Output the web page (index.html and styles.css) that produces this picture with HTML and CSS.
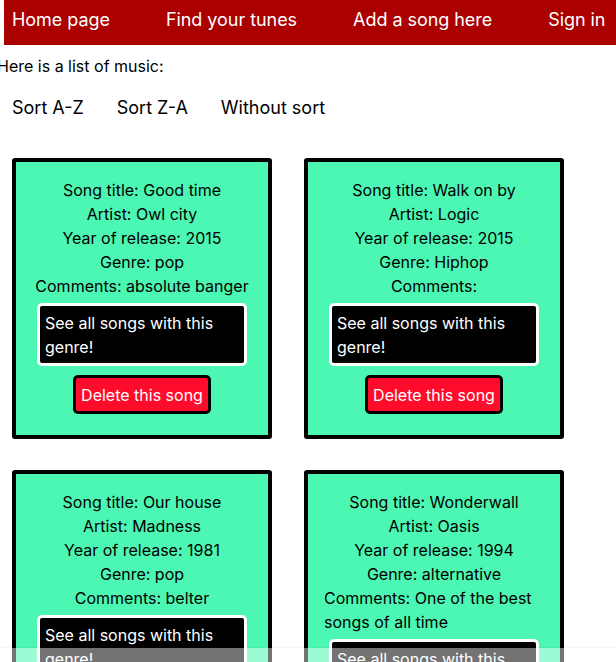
FILE: index.html
```html
<!DOCTYPE html>
<html>
<head>
<meta charset="utf-8">
<link rel="stylesheet" href="styles.css">
</head>
<body>
<nav class="topnav">
  <a class="nav-link">Home page</a>
  <a class="nav-link">Find your tunes</a>
  <a class="nav-link">Add a song here</a>
  <a class="nav-link">Sign in</a>
</nav>
<p class="intro">Here is a list of music:</p>
<div class="sorts">
  <button class="sort-btn">Sort A-Z</button>
  <button class="sort-btn">Sort Z-A</button>
  <button class="sort-btn">Without sort</button>
</div>
<div class="songs">
  <div class="card">
    <p class="line">Song title: Good time</p>
    <p class="line">Artist: Owl city</p>
    <p class="line">Year of release: 2015</p>
    <p class="line">Genre: pop</p>
    <p class="line">Comments: absolute banger</p>
    <button class="genre-btn">See all songs with this genre!</button>
    <button class="delete-btn">Delete this song</button>
  </div>
  <div class="card">
    <p class="line">Song title: Walk on by</p>
    <p class="line">Artist: Logic</p>
    <p class="line">Year of release: 2015</p>
    <p class="line">Genre: Hiphop</p>
    <p class="line">Comments: </p>
    <button class="genre-btn">See all songs with this genre!</button>
    <button class="delete-btn">Delete this song</button>
  </div>
  <div class="card">
    <p class="line">Song title: Our house</p>
    <p class="line">Artist: Madness</p>
    <p class="line">Year of release: 1981</p>
    <p class="line">Genre: pop</p>
    <p class="line">Comments: belter</p>
    <button class="genre-btn">See all songs with this genre!</button>
    <button class="delete-btn">Delete this song</button>
  </div>
  <div class="card">
    <p class="line">Song title: Wonderwall</p>
    <p class="line">Artist: Oasis</p>
    <p class="line">Year of release: 1994</p>
    <p class="line">Genre: alternative</p>
    <p class="line">Comments: One of the best songs of all time</p>
    <button class="genre-btn">See all songs with this genre!</button>
    <button class="delete-btn">Delete this song</button>
  </div>
</div>
<div class="bottom-fade"></div>
</body>
</html>
```

FILE: styles.css
```css
html, body {
  margin: 0;
  padding: 0;
  overflow: hidden;
}
body {
  font-family: Inter, "Noto Sans", sans-serif;
  font-size: 16px;
  line-height: 24px;
  color: #000;
  background: #fff;
}
.topnav {
  display: flex;
  gap: 56px;
  margin-left: 4px;
  height: 45px;
  padding: 0 8px;
  align-items: center;
  background: #aa0000;
}
.nav-link {
  color: #fff;
  font-size: 18px;
  line-height: 22px;
  letter-spacing: -0.05px;
  white-space: nowrap;
  margin-top: -5px;
}
.intro {
  margin: 9px 0 0 -3px;
}
.sorts {
  display: flex;
  gap: 33px;
  padding-left: 12px;
  margin-top: 19px;
}
.sort-btn {
  font-family: inherit;
  font-size: 18px;
  line-height: 22px;
  background: none;
  border: none;
  padding: 0;
  color: #000;
}
.songs {
  display: grid;
  grid-template-columns: 260px 260px;
  column-gap: 32px;
  row-gap: 31px;
  padding-left: 12px;
  margin-top: 39px;
}
.card {
  display: flex;
  flex-direction: column;
  align-items: center;
  background: #4bf7b3;
  border: 4px solid #000;
  border-radius: 3px;
  padding: 16px;
}
.line {
  margin: 0;
}
.genre-btn {
  width: 210px;
  margin-top: 5px;
  background: #000;
  color: #fff;
  border: 3px solid #fff;
  border-radius: 5px;
  padding: 5px 5px 4px;
  font-family: inherit;
  font-size: 16px;
  line-height: 24px;
  text-align: left;
}
.delete-btn {
  margin-top: 9px;
  margin-bottom: 5px;
  background: #ff0c2c;
  color: #fff;
  border: 3px solid #000;
  border-radius: 5px;
  padding: 5px 5px 4px;
  font-family: inherit;
  font-size: 16px;
  line-height: 24px;
}
.bottom-fade {
  position: fixed;
  left: 0;
  right: 0;
  bottom: 0;
  height: 14px;
  background: rgba(255, 255, 255, 0.45);
  box-shadow: 0 -1px 1px rgba(0, 0, 0, 0.04);
}
```
